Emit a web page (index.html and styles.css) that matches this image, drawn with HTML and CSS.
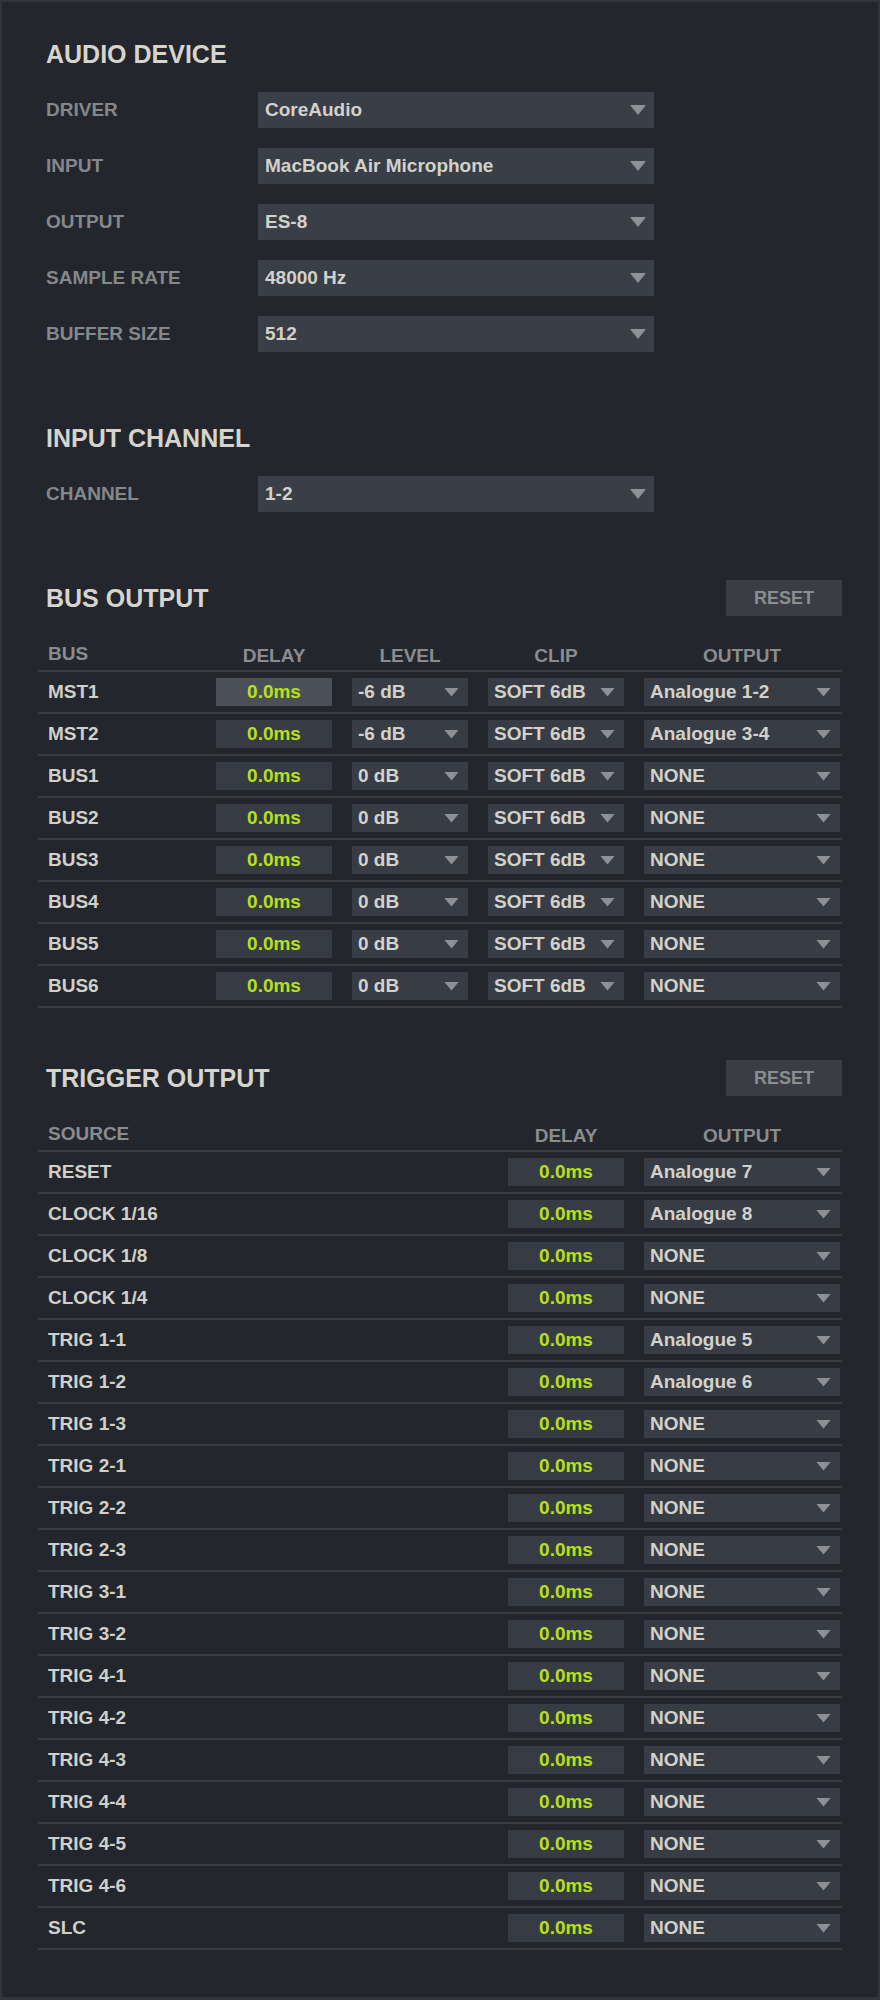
FILE: index.html
```html
<!DOCTYPE html>
<html lang="en">
<head>
<meta charset="utf-8">
<title>Audio Settings</title>
<link rel="stylesheet" href="styles.css">
</head>
<body>
<div class="panel">

  <section class="section">
    <div class="section-head"><h2 class="title">AUDIO DEVICE</h2></div>
    <div class="form">
      <div class="form-row"><span class="label">DRIVER</span><div class="select big">CoreAudio</div></div>
      <div class="form-row"><span class="label">INPUT</span><div class="select big">MacBook Air Microphone</div></div>
      <div class="form-row"><span class="label">OUTPUT</span><div class="select big">ES-8</div></div>
      <div class="form-row"><span class="label">SAMPLE RATE</span><div class="select big">48000 Hz</div></div>
      <div class="form-row"><span class="label">BUFFER SIZE</span><div class="select big">512</div></div>
    </div>
  </section>

  <section class="section gap68">
    <div class="section-head"><h2 class="title">INPUT CHANNEL</h2></div>
    <div class="form">
      <div class="form-row"><span class="label">CHANNEL</span><div class="select big">1-2</div></div>
    </div>
  </section>

  <section class="section gap68">
    <div class="section-head"><h2 class="title">BUS OUTPUT</h2><button class="reset">RESET</button></div>
    <div class="table bus">
      <div class="trow thead"><span class="hname">BUS</span><span class="hcol">DELAY</span><span class="hcol">LEVEL</span><span class="hcol">CLIP</span><span class="hcol">OUTPUT</span></div>
      <div class="trow"><span class="name">MST1</span><div class="delay focus">0.0ms</div><div class="select">-6 dB</div><div class="select">SOFT 6dB</div><div class="select">Analogue 1-2</div></div>
      <div class="trow"><span class="name">MST2</span><div class="delay">0.0ms</div><div class="select">-6 dB</div><div class="select">SOFT 6dB</div><div class="select">Analogue 3-4</div></div>
      <div class="trow"><span class="name">BUS1</span><div class="delay">0.0ms</div><div class="select">0 dB</div><div class="select">SOFT 6dB</div><div class="select">NONE</div></div>
      <div class="trow"><span class="name">BUS2</span><div class="delay">0.0ms</div><div class="select">0 dB</div><div class="select">SOFT 6dB</div><div class="select">NONE</div></div>
      <div class="trow"><span class="name">BUS3</span><div class="delay">0.0ms</div><div class="select">0 dB</div><div class="select">SOFT 6dB</div><div class="select">NONE</div></div>
      <div class="trow"><span class="name">BUS4</span><div class="delay">0.0ms</div><div class="select">0 dB</div><div class="select">SOFT 6dB</div><div class="select">NONE</div></div>
      <div class="trow"><span class="name">BUS5</span><div class="delay">0.0ms</div><div class="select">0 dB</div><div class="select">SOFT 6dB</div><div class="select">NONE</div></div>
      <div class="trow"><span class="name">BUS6</span><div class="delay">0.0ms</div><div class="select">0 dB</div><div class="select">SOFT 6dB</div><div class="select">NONE</div></div>
    </div>
  </section>

  <section class="section gap52">
    <div class="section-head"><h2 class="title">TRIGGER OUTPUT</h2><button class="reset">RESET</button></div>
    <div class="table trig">
      <div class="trow thead"><span class="hname">SOURCE</span><span class="hcol">DELAY</span><span class="hcol">OUTPUT</span></div>
      <div class="trow"><span class="name">RESET</span><div class="delay">0.0ms</div><div class="select">Analogue 7</div></div>
      <div class="trow"><span class="name">CLOCK 1/16</span><div class="delay">0.0ms</div><div class="select">Analogue 8</div></div>
      <div class="trow"><span class="name">CLOCK 1/8</span><div class="delay">0.0ms</div><div class="select">NONE</div></div>
      <div class="trow"><span class="name">CLOCK 1/4</span><div class="delay">0.0ms</div><div class="select">NONE</div></div>
      <div class="trow"><span class="name">TRIG 1-1</span><div class="delay">0.0ms</div><div class="select">Analogue 5</div></div>
      <div class="trow"><span class="name">TRIG 1-2</span><div class="delay">0.0ms</div><div class="select">Analogue 6</div></div>
      <div class="trow"><span class="name">TRIG 1-3</span><div class="delay">0.0ms</div><div class="select">NONE</div></div>
      <div class="trow"><span class="name">TRIG 2-1</span><div class="delay">0.0ms</div><div class="select">NONE</div></div>
      <div class="trow"><span class="name">TRIG 2-2</span><div class="delay">0.0ms</div><div class="select">NONE</div></div>
      <div class="trow"><span class="name">TRIG 2-3</span><div class="delay">0.0ms</div><div class="select">NONE</div></div>
      <div class="trow"><span class="name">TRIG 3-1</span><div class="delay">0.0ms</div><div class="select">NONE</div></div>
      <div class="trow"><span class="name">TRIG 3-2</span><div class="delay">0.0ms</div><div class="select">NONE</div></div>
      <div class="trow"><span class="name">TRIG 4-1</span><div class="delay">0.0ms</div><div class="select">NONE</div></div>
      <div class="trow"><span class="name">TRIG 4-2</span><div class="delay">0.0ms</div><div class="select">NONE</div></div>
      <div class="trow"><span class="name">TRIG 4-3</span><div class="delay">0.0ms</div><div class="select">NONE</div></div>
      <div class="trow"><span class="name">TRIG 4-4</span><div class="delay">0.0ms</div><div class="select">NONE</div></div>
      <div class="trow"><span class="name">TRIG 4-5</span><div class="delay">0.0ms</div><div class="select">NONE</div></div>
      <div class="trow"><span class="name">TRIG 4-6</span><div class="delay">0.0ms</div><div class="select">NONE</div></div>
      <div class="trow"><span class="name">SLC</span><div class="delay">0.0ms</div><div class="select">NONE</div></div>
    </div>
  </section>

</div>
</body>
</html>
```

FILE: styles.css
```css
* { box-sizing: border-box; }

html, body {
  margin: 0;
  padding: 0;
  background: #23262c;
}

body {
  font-family: "Liberation Sans", Arial, Helvetica, sans-serif;
  font-weight: bold;
  font-size: 19px;
  color: #d2d2ca;
}

.panel {
  width: 880px;
  height: 2000px;
  border: 2px solid #31343a;
  border-bottom-width: 3px;
  background: #23262c;
  padding: 34px 36px 0 36px;
}

.section.gap68 { margin-top: 68px; }
.section.gap52 { margin-top: 52px; }

.section-head {
  height: 36px;
  display: flex;
  align-items: center;
  justify-content: space-between;
}

.title {
  margin: 0;
  padding-left: 8px;
  font-size: 25px;
  line-height: 30px;
  font-weight: bold;
  color: #d5d5cd;
}

.reset {
  width: 116px;
  height: 36px;
  border: none;
  margin: 0;
  padding: 0;
  background: #3a3d44;
  color: #8b8e91;
  font-family: inherit;
  font-weight: bold;
  font-size: 18px;
}

.form {
  display: flex;
  flex-direction: column;
  gap: 20px;
  margin-top: 20px;
}

.form-row {
  display: flex;
  align-items: center;
}

.label {
  width: 220px;
  padding-left: 8px;
  color: #85888b;
  line-height: 22px;
}

.select {
  display: flex;
  align-items: center;
  justify-content: space-between;
  height: 28px;
  line-height: 28px;
  padding: 0 9px 0 6px;
  background: #383c44;
  color: #d2d2ca;
  white-space: nowrap;
}

.select::after {
  content: "";
  width: 15px;
  height: 9px;
  background: #8d9094;
  clip-path: polygon(0 0, 100% 0, 50% 100%);
  flex: none;
}

.select.big {
  width: 396px;
  height: 36px;
  line-height: 36px;
  padding: 0 8px 0 7px;
  background: #3a3e47;
}

.select.big::after {
  width: 16px;
  height: 10px;
}

.table {
  width: 804px;
}

.trow {
  display: grid;
  column-gap: 20px;
  align-items: center;
  padding: 6px 2px 6px 10px;
  border-bottom: 2px solid #393c43;
}

.bus .trow { grid-template-columns: 1fr 116px 116px 136px 196px; }
.trig .trow { grid-template-columns: 1fr 116px 196px; }

.trow.thead {
  padding: 27px 2px 3px 10px;
  align-items: start;
}

.hname {
  line-height: 22px;
  color: #8a8c8f;
}

.hcol {
  line-height: 22px;
  padding-top: 2px;
  text-align: center;
  color: #8a8c8f;
}

.name {
  line-height: 28px;
  color: #d0d0c9;
  white-space: nowrap;
}

.delay {
  height: 28px;
  line-height: 28px;
  text-align: center;
  background: #373b43;
  color: #b6e01c;
}

.delay.focus {
  background: #4b4f57;
}
```
